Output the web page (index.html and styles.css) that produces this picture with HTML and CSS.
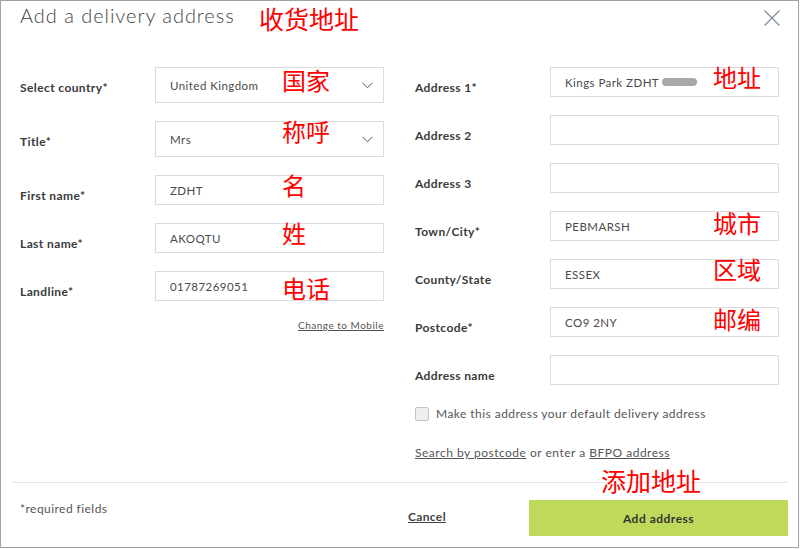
FILE: index.html
```html
<!DOCTYPE html>
<html lang="en">
<head>
    <meta charset="UTF-8">
    <meta name="viewport" content="width=device-width, initial-scale=1.0">
    <title>Add a delivery address</title>
    <link rel="stylesheet" href="styles.css">
</head>
<body>
    <div class="dialog">
        <div class="dialog-head">
            <h1>Add a delivery address</h1>
            <span class="note note-title">收货地址</span>
            <button class="close" type="button" aria-label="Close">
                <svg width="16" height="16" viewBox="0 0 16 16">
                    <path d="M0.5 0.5 L15.5 15.5 M15.5 0.5 L0.5 15.5" stroke="#7b8b98" stroke-width="1.2" fill="none"/>
                </svg>
            </button>
        </div>

        <form class="dialog-body">
            <div class="col">
                <div class="field">
                    <label>Select country*</label>
                    <div class="control control-select">
                        United Kingdom
                        <svg class="chevron" width="11" height="7" viewBox="0 0 11 7"><path d="M0.5 0.8 L5.5 5.8 L10.5 0.8" stroke="#555" fill="none"/></svg>
                        <span class="note note-down">国家</span>
                    </div>
                </div>
                <div class="field">
                    <label>Title*</label>
                    <div class="control control-select">
                        Mrs
                        <svg class="chevron" width="11" height="7" viewBox="0 0 11 7"><path d="M0.5 0.8 L5.5 5.8 L10.5 0.8" stroke="#555" fill="none"/></svg>
                        <span class="note">称呼</span>
                    </div>
                </div>
                <div class="field">
                    <label>First name*</label>
                    <div class="control">ZDHT<span class="note">名</span></div>
                </div>
                <div class="field">
                    <label>Last name*</label>
                    <div class="control">AKOQTU<span class="note">姓</span></div>
                </div>
                <div class="field">
                    <label>Landline*</label>
                    <div class="control">01787269051<span class="note note-low">电话</span></div>
                </div>
                <a class="change-link" href="#">Change to Mobile</a>
            </div>

            <div class="col">
                <div class="field">
                    <label>Address 1*</label>
                    <div class="control">Kings Park ZDHT <span class="blur"></span><span class="note note-right">地址</span></div>
                </div>
                <div class="field">
                    <label>Address 2</label>
                    <div class="control"></div>
                </div>
                <div class="field">
                    <label>Address 3</label>
                    <div class="control"></div>
                </div>
                <div class="field">
                    <label>Town/City*</label>
                    <div class="control">PEBMARSH<span class="note note-right note-mid">城市</span></div>
                </div>
                <div class="field">
                    <label>County/State</label>
                    <div class="control">ESSEX<span class="note note-right">区域</span></div>
                </div>
                <div class="field">
                    <label>Postcode*</label>
                    <div class="control">CO9 2NY<span class="note note-right note-mid">邮编</span></div>
                </div>
                <div class="field">
                    <label>Address name</label>
                    <div class="control"></div>
                </div>
                <label class="check"><span class="box"></span>Make this address your default delivery address</label>
                <p class="search"><a href="#">Search by postcode</a> or enter a <a href="#">BFPO address</a></p>
            </div>
        </form>

        <div class="dialog-foot">
            <span class="required">*required fields</span>
            <a class="cancel" href="#">Cancel</a>
            <div class="submit">
                <span class="note note-submit">添加地址</span>
                <button type="button" class="add">Add address</button>
            </div>
        </div>
    </div>
</body>
</html>
```

FILE: styles.css
```css
body {
    margin: 0;
    font-family: Lato, "Open Sans", Arial, sans-serif;
    background: #fff;
}
.dialog {
    position: relative;
    display: flex;
    flex-direction: column;
    width: 799px;
    height: 548px;
    border: 1px solid #a2a2a2;
    box-sizing: border-box;
    background: #fff;
}
.dialog-head {
    position: relative;
    display: flex;
    align-items: flex-start;
    padding: 2px 18px 0 19px;
}
.dialog-head h1 {
    margin: 0;
    font-size: 20px;
    line-height: 24px;
    font-weight: 300;
    color: #444;
    letter-spacing: 0.95px;
}
.close {
    margin: 7px 0 0 auto;
    padding: 0;
    border: none;
    background: none;
    width: 16px;
    height: 16px;
    cursor: pointer;
}
.close svg {
    display: block;
}

.dialog-body {
    flex: 1;
    display: grid;
    grid-template-columns: 364px 364px;
    column-gap: 31px;
    padding: 40px 0 0 19px;
}
.col {
    display: flex;
    flex-direction: column;
    gap: 18px;
}
.field {
    display: grid;
    grid-template-columns: 135px 229px;
    align-items: start;
}
.field label {
    padding-top: 14px;
    font-size: 12px;
    line-height: 14px;
    font-weight: 700;
    color: #3a3a3a;
    letter-spacing: 0.4px;
}
.control {
    position: relative;
    display: flex;
    align-items: center;
    height: 30px;
    padding: 0 14px;
    border: 1px solid #dcdcdc;
    box-sizing: border-box;
    font-size: 11.5px;
    color: #4a4a4a;
    letter-spacing: 0.45px;
}
.control-select {
    height: 36px;
}
.chevron {
    margin-left: auto;
    margin-right: -4px;
}
.blur {
    display: inline-block;
    width: 35px;
    height: 8px;
    margin-left: 3px;
    border-radius: 4px;
    background: #a9a9a9;
}
.note {
    position: absolute;
    top: -3px;
    left: 126px;
    font-family: "Noto Sans CJK SC", sans-serif;
    font-size: 24px;
    line-height: 24px;
    color: #ff0000;
    letter-spacing: 0;
    white-space: nowrap;
}
.note-down {
    top: 0;
}
.note-low {
    top: 4px;
}
.note-right {
    left: 162px;
}
.note-mid {
    top: -1px;
}
.note-title {
    top: 5px;
    left: 258px;
    font-size: 25px;
    line-height: 25px;
}
.change-link {
    align-self: flex-end;
    margin-top: -1px;
    font-size: 10px;
    line-height: 14px;
    color: #555;
    letter-spacing: 0.5px;
}

.check {
    display: flex;
    align-items: center;
    gap: 7px;
    margin-top: 4px;
    font-size: 12px;
    line-height: 14px;
    color: #555;
    letter-spacing: 0.45px;
}
.check .box {
    width: 14px;
    height: 14px;
    border: 1px solid #c4c4c4;
    border-radius: 2px;
    background: #efefef;
    box-sizing: border-box;
}
.search {
    margin: 7px 0 0;
    font-size: 12px;
    line-height: 14px;
    color: #555;
    letter-spacing: 0.5px;
}
.search a {
    color: #555;
}

.dialog-foot {
    display: grid;
    grid-template-columns: 1fr 121px 259px;
    align-items: start;
    height: 65px;
    margin: 0 10px 0 11px;
    padding: 17px 0 0 8px;
    border-top: 1px solid #e4e4e4;
    box-sizing: border-box;
}
.required {
    margin-top: 2px;
    font-size: 12px;
    line-height: 14px;
    color: #555;
    letter-spacing: 0.45px;
}
.cancel {
    margin-top: 10px;
    font-size: 12px;
    line-height: 14px;
    font-weight: 700;
    color: #444;
    letter-spacing: 0.35px;
}
.submit {
    position: relative;
}
.add {
    display: block;
    width: 100%;
    height: 36px;
    border: none;
    background-color: #bfd95a;
    font-family: inherit;
    font-size: 12px;
    font-weight: 700;
    color: #333;
    letter-spacing: 0.5px;
    cursor: pointer;
}
.note-submit {
    top: -32px;
    left: 72px;
    font-size: 25px;
    line-height: 25px;
}
```
